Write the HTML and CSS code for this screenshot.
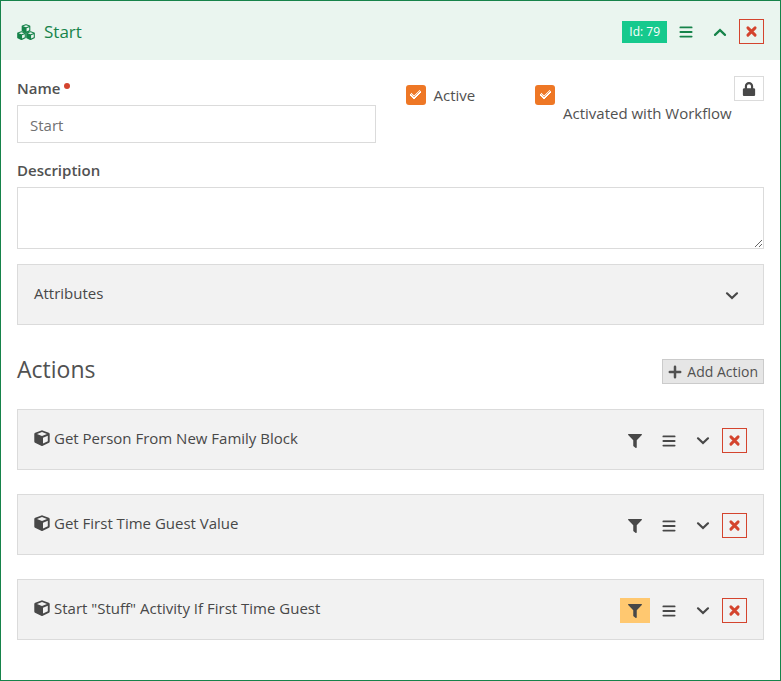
FILE: index.html
```html
<!DOCTYPE html>
<html lang="en">
<head>
  <meta charset="UTF-8" />
  <meta name="viewport" content="width=device-width, initial-scale=1" />
  <title>Start - Workflow Activity</title>
  <link rel="stylesheet" href="styles.css">
</head>
<body>

  <!-- Shared icons -->
  <svg class="sprite" aria-hidden="true">
    <symbol id="cube" viewBox="0 0 16 16"><path fill-rule="evenodd" d="M7.4.4q.6-.2 1.2 0l6.2 2.3q.9.4.9 1.3v7.6q0 .8-.7 1.2l-6.2 3q-.8.4-1.6 0l-6.2-3q-.7-.4-.7-1.2V4q0-.9.9-1.3zM8 2L3 3.9l5 2 5-2zM9 7.7v5.8l4.8-2.3V5.8z"/></symbol>
    <symbol id="cubes" viewBox="0 0 18 18">
      <use href="#cube" x="4" y="1" width="10" height="9"/>
      <use href="#cube" x="0" y="8" width="9" height="9"/>
      <use href="#cube" x="9" y="8" width="9" height="9"/>
    </symbol>
    <symbol id="filter" viewBox="0 0 512 512"><path d="M487.976 0H24.028C2.71 0-8.047 25.866 7.058 40.971L192 225.941V432c0 7.831 3.821 15.17 10.237 19.662l80 55.98C298.02 518.69 320 507.493 320 487.98V225.941l184.947-184.97C520.021 25.896 509.338 0 487.976 0z"/></symbol>
    <symbol id="lock" viewBox="-32 0 512 512"><path d="M400 224h-24v-72C376 68.2 307.8 0 224 0S72 68.2 72 152v72H48c-26.5 0-48 21.5-48 48v192c0 26.5 21.5 48 48 48h352c26.5 0 48-21.5 48-48V272c0-26.5-21.5-48-48-48zm-104 0H152v-72c0-39.7 32.3-72 72-72s72 32.3 72 72v72z"/></symbol>
    <symbol id="bars" viewBox="0 0 14 14"><path d="M1.4 2.4h11.2M1.4 7h11.2M1.4 11.6h11.2" stroke="currentColor" stroke-width="1.9" stroke-linecap="round"/></symbol>
    <symbol id="down" viewBox="0 0 14 14"><path d="M2 4.3l5 4.8 5-4.8" fill="none" stroke="currentColor" stroke-width="2.2" stroke-linecap="round"/></symbol>
    <symbol id="up" viewBox="0 0 14 14"><path d="M2 9.9l5-4.8 5 4.8" fill="none" stroke="currentColor" stroke-width="2.2" stroke-linecap="round"/></symbol>
    <symbol id="times" viewBox="0 0 14 14"><path d="M2.9 2.9l7.2 7.2M10.1 2.9l-7.2 7.2" stroke="currentColor" stroke-width="2.9" stroke-linecap="round"/></symbol>
    <symbol id="plus" viewBox="0 0 14 14"><path d="M7 1.8v10.4M1.8 7h10.4" stroke="currentColor" stroke-width="2.5" stroke-linecap="round"/></symbol>
  </svg>

  <section class="activity">
    <header class="activity-header">
      <h1 class="activity-title"><svg class="icon-lg"><use href="#cubes"/></svg>Start</h1>
      <div class="toolbar">
        <span class="badge">Id: 79</span>
        <button type="button" class="btn-icon" aria-label="Reorder activity"><svg class="icon"><use href="#bars"/></svg></button>
        <button type="button" class="btn-icon" aria-label="Collapse activity"><svg class="icon"><use href="#up"/></svg></button>
        <button type="button" class="btn-icon btn-delete" aria-label="Delete activity"><svg class="icon"><use href="#times"/></svg></button>
      </div>
    </header>

    <div class="activity-body">
      <div class="row">
        <div class="col-name">
          <label class="control-label required" for="name">Name</label>
          <input type="text" class="form-control" id="name" value="Start" required>
        </div>
        <div class="col-active">
          <label class="checkbox">
            <input type="checkbox" checked>
            <span>Active</span>
          </label>
        </div>
        <div class="col-activated">
          <label class="checkbox">
            <input type="checkbox" checked>
            <span class="label-below">Activated with Workflow</span>
          </label>
          <button type="button" class="btn-icon btn-lock" aria-label="Security"><svg class="icon"><use href="#lock"/></svg></button>
        </div>
      </div>

      <div class="form-group">
        <label class="control-label" for="description">Description</label>
        <textarea class="form-control" id="description"></textarea>
      </div>

      <div class="panel">
        <div class="panel-title">Attributes</div>
        <div class="toolbar">
          <button type="button" class="btn-icon" aria-label="Expand attributes"><svg class="icon"><use href="#down"/></svg></button>
        </div>
      </div>

      <div class="actions-heading">
        <h2>Actions</h2>
        <button type="button" class="btn-add"><svg class="icon"><use href="#plus"/></svg>Add Action</button>
      </div>

      <!-- Actions -->
      <div class="panel">
        <div class="panel-title"><svg class="icon-md"><use href="#cube"/></svg>Get Person From New Family Block</div>
        <div class="toolbar">
          <button type="button" class="btn-icon" aria-label="Filter"><svg class="icon"><use href="#filter"/></svg></button>
          <button type="button" class="btn-icon" aria-label="Reorder"><svg class="icon"><use href="#bars"/></svg></button>
          <button type="button" class="btn-icon" aria-label="Expand"><svg class="icon"><use href="#down"/></svg></button>
          <button type="button" class="btn-icon btn-delete" aria-label="Delete"><svg class="icon"><use href="#times"/></svg></button>
        </div>
      </div>

      <div class="panel">
        <div class="panel-title"><svg class="icon-md"><use href="#cube"/></svg>Get First Time Guest Value</div>
        <div class="toolbar">
          <button type="button" class="btn-icon" aria-label="Filter"><svg class="icon"><use href="#filter"/></svg></button>
          <button type="button" class="btn-icon" aria-label="Reorder"><svg class="icon"><use href="#bars"/></svg></button>
          <button type="button" class="btn-icon" aria-label="Expand"><svg class="icon"><use href="#down"/></svg></button>
          <button type="button" class="btn-icon btn-delete" aria-label="Delete"><svg class="icon"><use href="#times"/></svg></button>
        </div>
      </div>

      <div class="panel">
        <div class="panel-title"><svg class="icon-md"><use href="#cube"/></svg>Start "Stuff" Activity If First Time Guest</div>
        <div class="toolbar">
          <button type="button" class="btn-icon btn-filtered" aria-label="Filter"><svg class="icon"><use href="#filter"/></svg></button>
          <button type="button" class="btn-icon" aria-label="Reorder"><svg class="icon"><use href="#bars"/></svg></button>
          <button type="button" class="btn-icon" aria-label="Expand"><svg class="icon"><use href="#down"/></svg></button>
          <button type="button" class="btn-icon btn-delete" aria-label="Delete"><svg class="icon"><use href="#times"/></svg></button>
        </div>
      </div>
    </div>
  </section>

</body>
</html>
```
FILE: styles.css
```css
* {
  box-sizing: border-box;
}

body {
  margin: 0;
  font-family: "Segoe UI", "Open Sans", sans-serif;
  font-size: 15px;
  line-height: 20px;
  color: #515151;
  background-color: #fff;
}

button,
input,
textarea {
  font: inherit;
  color: inherit;
}

svg {
  fill: currentColor;
  flex: none;
}

.sprite {
  position: absolute;
  width: 0;
  height: 0;
}

.icon {
  width: 14px;
  height: 14px;
}

.icon-md {
  width: 16px;
  height: 16px;
}

.icon-lg {
  width: 18px;
  height: 18px;
}

.activity {
  border: 1px solid #16834a;
}

.activity-header {
  display: flex;
  justify-content: space-between;
  align-items: center;
  padding: 18px 16px 16px;
  background-color: #eaf5ef;
  color: #16834a;
}

.activity-title {
  display: flex;
  align-items: center;
  gap: 9px;
  margin: 0;
  font-size: 17px;
  font-weight: 400;
}

.toolbar {
  display: flex;
  align-items: center;
  gap: 4px;
}

.badge {
  padding: 1px 7px;
  background-color: #16c98d;
  color: #fff;
  font-size: 12px;
  font-weight: 500;
}

.btn-icon {
  display: flex;
  justify-content: center;
  align-items: center;
  width: 30px;
  height: 25px;
  padding: 0;
  border: none;
  background: none;
  cursor: pointer;
}

.btn-delete {
  width: 25px;
  border: 1px solid #d4442e;
  color: #d4442e;
}

.btn-lock {
  border: 1px solid #dbdbdb;
  color: #484848;
}

.btn-filtered {
  background-color: #ffc870;
}

.activity-body {
  padding: 16px;
}

.row {
  display: grid;
  grid-template-columns: repeat(12, 1fr);
  column-gap: 30px;
  margin-bottom: 15px;
}

.col-name {
  grid-column: span 6;
}

.col-active {
  grid-column: span 2;
}

.col-activated {
  grid-column: span 4;
  display: flex;
  justify-content: space-between;
  align-items: flex-start;
}

.control-label {
  display: block;
  margin-bottom: 5px;
  font-weight: 600;
  line-height: 24px;
}

.required::after {
  content: "";
  display: inline-block;
  width: 6px;
  height: 6px;
  margin-left: 4px;
  border-radius: 50%;
  background-color: #d4442e;
  vertical-align: 5px;
}

.form-control {
  display: block;
  width: 100%;
  height: 38px;
  padding: 7px 12px 6px;
  border: 1px solid #dbdbdb;
  background-color: #fff;
  color: #717171;
}

textarea.form-control {
  height: 62px;
  resize: vertical;
}

.form-group {
  margin-bottom: 15px;
}

.checkbox {
  display: flex;
  align-items: flex-start;
  gap: 8px;
  padding-top: 9px;
  white-space: nowrap;
}

.checkbox input {
  appearance: none;
  flex: none;
  width: 20px;
  height: 20px;
  margin: 0;
  border-radius: 3px;
  background-color: #ee7725;
  display: grid;
  place-items: center;
}

.checkbox input:checked::before {
  content: "";
  width: 9px;
  height: 5px;
  margin-bottom: 3px;
  border: solid #fff;
  border-width: 0 0 2px 2px;
  border-radius: 1px;
  box-shadow: inset 1px -1px #fff;
  transform: rotate(-45deg);
}

.label-below {
  margin-top: 18px;
}

.panel {
  display: flex;
  justify-content: space-between;
  align-items: flex-start;
  margin-bottom: 24px;
  padding: 18px 16px 16px;
  border: 1px solid #dbdbdb;
  background-color: #f2f2f2;
  color: #484848;
}

.panel-title {
  display: flex;
  align-items: center;
  gap: 4px;
}

.actions-heading {
  display: flex;
  justify-content: space-between;
  align-items: flex-start;
  margin: 34px 0 25px;
}

.actions-heading h2 {
  margin: 0;
  font-size: 23px;
  font-weight: 400;
  line-height: 20px;
}

.btn-add {
  display: flex;
  align-items: center;
  gap: 5px;
  height: 25px;
  padding: 0 5px;
  border: 1px solid #cbcbcb;
  background-color: #e6e6e6;
  font-size: 14px;
  cursor: pointer;
}
```
